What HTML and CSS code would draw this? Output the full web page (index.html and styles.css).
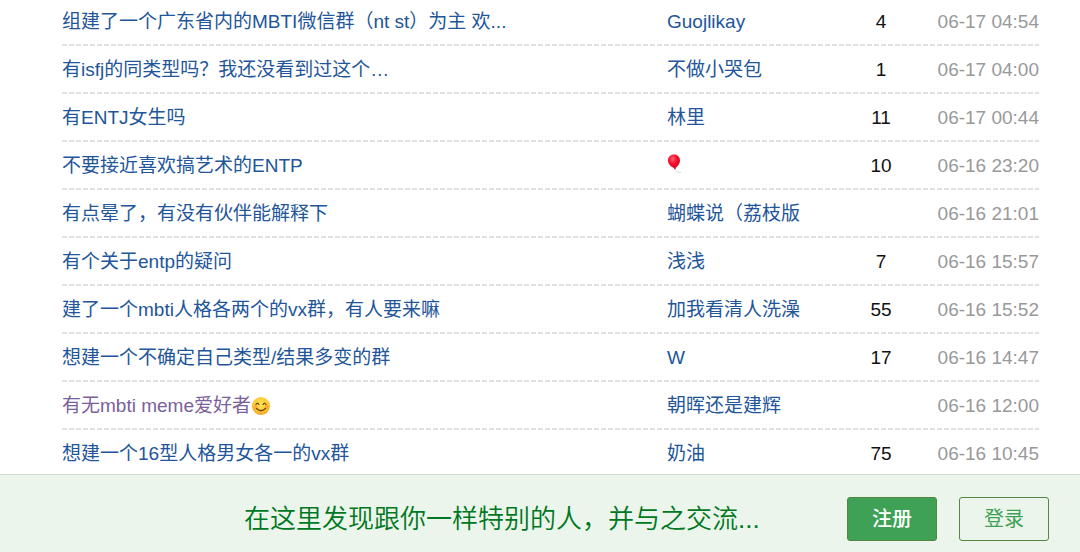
FILE: index.html
```html
<!DOCTYPE html>
<html lang="zh-CN">
<head>
	<meta charset="UTF-8">
	<title>小组讨论</title>
	<link rel="stylesheet" href="styles.css">
</head>
<body>
	<div class="content">
		<table class="topics">
			<tr>
				<td class="title"><a href="#">组建了一个广东省内的MBTI微信群（nt st）为主 欢...</a></td>
				<td class="author"><a href="#">Guojlikay</a></td>
				<td class="count">4</td>
				<td class="time">06-17 04:54</td>
			</tr>
			<tr>
				<td class="title"><a href="#">有isfj的同类型吗？我还没看到过这个…</a></td>
				<td class="author"><a href="#">不做小哭包</a></td>
				<td class="count">1</td>
				<td class="time">06-17 04:00</td>
			</tr>
			<tr>
				<td class="title"><a href="#">有ENTJ女生吗</a></td>
				<td class="author"><a href="#">林里</a></td>
				<td class="count">11</td>
				<td class="time">06-17 00:44</td>
			</tr>
			<tr>
				<td class="title"><a href="#">不要接近喜欢搞艺术的ENTP</a></td>
				<td class="author"><a href="#" aria-label="气球"><svg class="balloon" viewBox="0 0 16 20">
					<defs><radialGradient id="red" cx=".4" cy=".3" r=".7"><stop offset="0" stop-color="#ff6072"/><stop offset=".45" stop-color="#f5142f"/><stop offset="1" stop-color="#d9001f"/></radialGradient></defs>
					<path d="M8 14.500C9.500 18 11 18.500 14 18.500" fill="none" stroke="#d8d8d8"/>
					<path d="M7 0.500C10.500 0.500 13 3 13 6.500C13 10 10 13 8.500 14L9 15.200L7 15L7.300 14C3.500 12.500 1 10 1 6.500C1 3 3.500 0.500 7 0.500Z" fill="url(#red)"/>
				</svg></a></td>
				<td class="count">10</td>
				<td class="time">06-16 23:20</td>
			</tr>
			<tr>
				<td class="title"><a href="#">有点晕了，有没有伙伴能解释下</a></td>
				<td class="author"><a href="#">蝴蝶说（荔枝版</a></td>
				<td class="count"></td>
				<td class="time">06-16 21:01</td>
			</tr>
			<tr>
				<td class="title"><a href="#">有个关于entp的疑问</a></td>
				<td class="author"><a href="#">浅浅</a></td>
				<td class="count">7</td>
				<td class="time">06-16 15:57</td>
			</tr>
			<tr>
				<td class="title"><a href="#">建了一个mbti人格各两个的vx群，有人要来嘛</a></td>
				<td class="author"><a href="#">加我看清人洗澡</a></td>
				<td class="count">55</td>
				<td class="time">06-16 15:52</td>
			</tr>
			<tr>
				<td class="title"><a href="#">想建一个不确定自己类型/结果多变的群</a></td>
				<td class="author"><a href="#">W</a></td>
				<td class="count">17</td>
				<td class="time">06-16 14:47</td>
			</tr>
			<tr>
				<td class="title"><a href="#" class="visited">有无mbti meme爱好者<svg class="smile" viewBox="0 0 20 20">
					<defs><radialGradient id="yellow" cx=".5" cy=".4" r=".6"><stop offset="0" stop-color="#ffe65a"/><stop offset=".7" stop-color="#fdc82f"/><stop offset="1" stop-color="#f09a1c"/></radialGradient></defs>
					<circle cx="10" cy="10" r="9" fill="url(#yellow)"/>
					<circle cx="4.500" cy="11" r="2" fill="#f98a3c" opacity=".5"/>
					<circle cx="15.500" cy="11" r="2" fill="#f98a3c" opacity=".5"/>
					<path d="M5 8.500Q6.500 5.800 8 8.500M12 8.500Q13.500 5.800 15 8.500M5.500 12.500Q10 17 14.500 12.500" fill="none" stroke="#71410f" stroke-width="1.200" stroke-linecap="round"/>
				</svg></a></td>
				<td class="author"><a href="#">朝晖还是建辉</a></td>
				<td class="count"></td>
				<td class="time">06-16 12:00</td>
			</tr>
			<tr>
				<td class="title"><a href="#">想建一个16型人格男女各一的vx群</a></td>
				<td class="author"><a href="#">奶油</a></td>
				<td class="count">75</td>
				<td class="time">06-16 10:45</td>
			</tr>
		</table>
	</div>
	<div class="bar">
		<p class="slogan">在这里发现跟你一样特别的人，并与之交流...</p>
		<button type="button" class="btn register">注册</button>
		<button type="button" class="btn login">登录</button>
	</div>
</body>
</html>
```
FILE: styles.css
```css
body { margin: 0;background: #fff;color: #111;font: 19px/24px "Liberation Sans", "Noto Sans CJK SC", sans-serif; }
a { color: #259;text-decoration: none; }
a.visited { color: #7a6199; }

/* 话题列表 */
.content { padding: 0 41px 0 62px; }
.topics { width: 100%;margin-top: -2px;border-collapse: collapse;table-layout: fixed; }
.topics tr { background: repeating-linear-gradient(90deg, #e2e2e2 0, #e2e2e2 5px, transparent 5px, transparent 7px) left bottom / 100% 2px no-repeat; }
.topics td { height: 48px;padding: 0;white-space: nowrap; }
.author { width: 188px; }
.count { width: 52px;text-align: center; }
.time { width: 132px;color: #999;text-align: right; }
.balloon { width: 16px;height: 20px;vertical-align: -2px; }
.smile { width: 20px;height: 20px;vertical-align: -4px; }

/* 底部登录条 */
.bar { position: fixed;left: 0;right: 0;bottom: 0;display: flex;align-items: center;box-sizing: border-box;height: 78px;padding: 10px 31px 0 244px;border-top: 1px solid #d5dad6;background: #ebf5eb; }
.slogan { flex: 1;margin: 0;color: #072;font-size: 26px;font-weight: 350;line-height: 36px; }
.btn { width: 90px;height: 44px;margin-left: 22px;padding: 0;border: 1px solid #528641;border-radius: 3px;font: inherit;font-size: 20px; }
.register { background: #3fa156;color: #fff;font-weight: 500; }
.login { background: transparent;color: #3fa156; }
```
